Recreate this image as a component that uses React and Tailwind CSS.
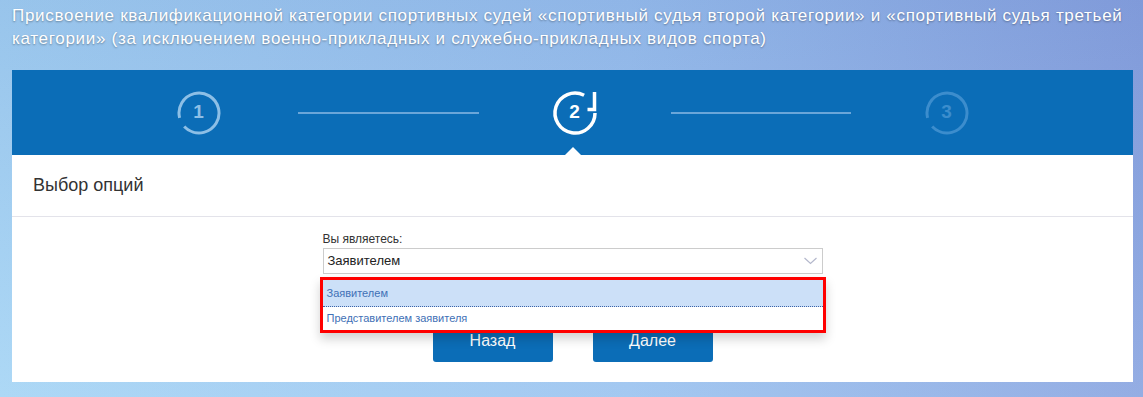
import React from "react";

const StepDone = ({ n, tone }) => (
  <div className="relative flex h-[44px] w-[44px] items-center justify-center">
    <svg width="44" height="44" viewBox="0 0 44 44" className="absolute inset-0">
      <circle
        cx="22"
        cy="22"
        r="20"
        fill="none"
        stroke={tone}
        strokeWidth="3"
        strokeDasharray="115 10.7"
        transform="rotate(166 22 22)"
      />
    </svg>
    <span className="relative text-[19px] font-bold" style={{ color: tone }}>
      {n}
    </span>
  </div>
);

const StepActive = ({ n }) => (
  <div className="relative flex h-[44px] w-[44px] items-center justify-center">
    <svg width="48" height="48" viewBox="0 0 48 48" className="absolute -left-[2px] -top-[2px]">
      <path
        d="M44 24 A20 20 0 1 1 33.1 6.2"
        fill="none"
        stroke="#fff"
        strokeWidth="3.5"
      />
      <path d="M43.5 3 V20.5 H36.5" fill="none" stroke="#fff" strokeWidth="3.5" />
    </svg>
    <span className="relative text-[19px] font-bold text-white">{n}</span>
  </div>
);

const App = () => {
  return (
    <div className="h-[397px] w-full overflow-hidden bg-[linear-gradient(to_bottom,rgba(30,50,150,0.10),rgba(255,255,255,0.08)),linear-gradient(to_right,#a6d5f5,#9cc4f0_55%,#8ba6e1)] px-[12px] font-['Liberation_Sans',Arial,sans-serif]">
      {/* Title */}
      <h1 className="w-[1121px] pt-[4px] text-[17px] leading-[23px] font-normal tracking-[0.7px] text-white [text-shadow:0_1px_2px_rgba(0,0,0,0.35)]">
        Присвоение квалификационной категории спортивных судей «спортивный судья второй категории» и «спортивный судья третьей категории» (за исключением военно-прикладных и служебно-прикладных видов спорта)
      </h1>

      <div className="mt-[20px] w-[1121px] bg-white">
        {/* Steps */}
        <div className="relative flex h-[85px] items-center justify-center bg-[#0b6db7]">
          <div className="mr-[77px]">
            <StepDone n="1" tone="#8dbfe6" />
          </div>
          <div className="h-[2px] w-[181px] bg-[#6aa6d9]" />
          <div className="mx-[74px]">
            <StepActive n="2" />
          </div>
          <div className="h-[2px] w-[180px] bg-[#6aa6d9]" />
          <div className="ml-[74px]">
            <StepDone n="3" tone="#3c8dcd" />
          </div>
          <div className="absolute bottom-0 left-1/2 h-0 w-0 -translate-x-1/2 border-x-[8px] border-b-[8px] border-x-transparent border-b-white" />
        </div>

        {/* Section title */}
        <div className="flex h-[62px] items-center border-b border-[#e3e3ea] px-[21px] text-[18px] text-[#333]">
          Выбор опций
        </div>

        {/* Form */}
        <div className="flex flex-col items-center pt-[14px] pb-[20px]">
          <div className="relative w-[500px]">
            <div className="text-[12px] leading-[16px] text-[#333]">Вы являетесь:</div>
            <div className="mt-[1px] flex h-[26px] items-center justify-between border border-[#ccc] pr-[5px] pl-[4px] text-[13px] text-[#222]">
              <span>Заявителем</span>
              <svg width="13" height="8" viewBox="0 0 13 8">
                <path d="M0.5 1 L6.5 6.5 L12.5 1" fill="none" stroke="#b4b8cc" strokeWidth="1.2" />
              </svg>
            </div>

            {/* Open dropdown */}
            <div className="absolute top-[46px] -left-[3px] z-10 w-[506px] border-[3px] border-[#f00] bg-white text-[11px] text-[#4170b6] shadow-[0_6px_10px_rgba(0,0,0,0.18)]">
              <div className="flex h-[27px] items-center border-b border-dotted border-[#3d64a8] bg-[#cce0f8] pl-[4px]">
                Заявителем
              </div>
              <div className="flex h-[23px] items-center pl-[4px]">Представителем заявителя</div>
            </div>
          </div>

          <div className="mt-[45px] flex gap-[40px]">
            <button className="h-[43px] w-[120px] rounded-[3px] bg-[#0b6db7] text-[16px] text-white">
              Назад
            </button>
            <button className="h-[43px] w-[120px] rounded-[3px] bg-[#0b6db7] text-[16px] text-white">
              Далее
            </button>
          </div>
        </div>
      </div>
    </div>
  );
};

export default App;
